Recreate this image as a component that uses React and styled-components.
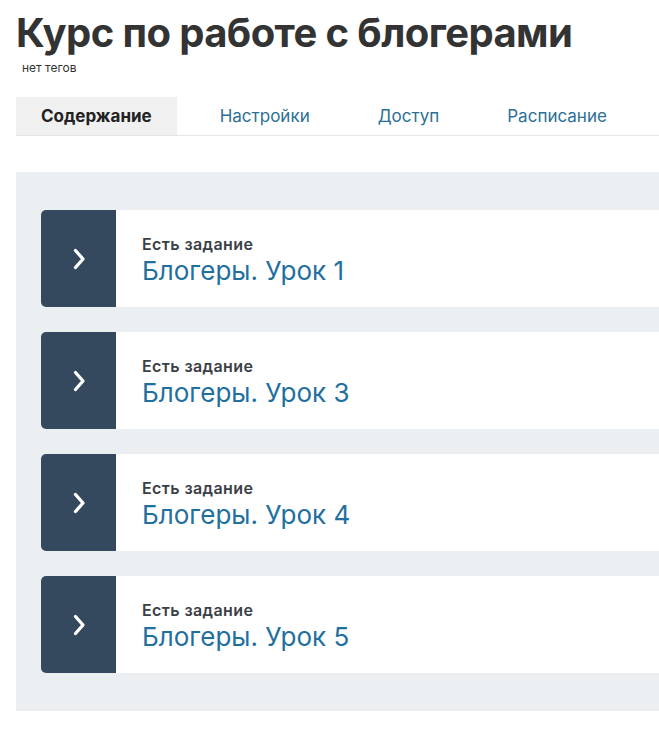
import styled, { createGlobalStyle } from 'styled-components';

const GlobalStyle = createGlobalStyle`
  html, body {
    margin: 0;
    padding: 0;
    background: #ffffff;
    overflow: hidden;
  }
  body {
    font-family: Inter, 'Noto Sans', sans-serif;
    color: #333333;
  }
`;

const Page = styled.div`
  padding: 9px 0 0 16px;
`;

const Title = styled.h1`
  margin: 0;
  font-size: 40px;
  font-weight: 700;
  line-height: 48px;
  letter-spacing: -0.6px;
  color: #333333;
`;

const Tags = styled.div`
  margin: 4px 0 0 6px;
  font-size: 12px;
  line-height: 14px;
  color: #333333;
`;

const Tabs = styled.div`
  display: flex;
  gap: 18px;
  margin-top: 22px;
  border-bottom: 1px solid #e6e6e6;
`;

const Tab = styled.div`
  height: 38px;
  display: flex;
  align-items: center;
  padding: 0 25px;
  font-size: 17px;
  font-weight: ${(p) => (p.$active ? 700 : 400)};
  color: ${(p) => (p.$active ? '#222222' : '#2d6f96')};
  background: ${(p) => (p.$active ? '#f0f0f0' : 'transparent')};
`;

const Lessons = styled.div`
  margin-top: 36px;
  background: #eceff1;
  padding: 38px 0 38px 25px;
  display: flex;
  flex-direction: column;
  gap: 25px;
`;

const Card = styled.div`
  display: flex;
  height: 97px;
  background: #ffffff;
  border-radius: 5px 0 0 5px;
`;

const Toggle = styled.div`
  width: 75px;
  flex-shrink: 0;
  display: flex;
  align-items: center;
  justify-content: center;
  background: #34495e;
  border-radius: 5px 0 0 5px;
`;

const Info = styled.div`
  display: flex;
  flex-direction: column;
  justify-content: center;
  padding: 5px 0 0 26px;
`;

const Badge = styled.div`
  font-size: 16px;
  font-weight: 600;
  line-height: 20px;
  letter-spacing: 0.4px;
  color: #3b4046;
`;

const LessonName = styled.div`
  font-size: 26px;
  font-weight: 400;
  line-height: 34px;
  color: #1f6f9f;
`;

const tabs = ['Содержание', 'Настройки', 'Доступ', 'Расписание'];
const lessons = ['Блогеры. Урок 1', 'Блогеры. Урок 3', 'Блогеры. Урок 4', 'Блогеры. Урок 5'];

function Chevron() {
  return (
    <svg width="18" height="24" viewBox="0 0 18 24" fill="none">
      <path d="M5.5 3.5 L13 12 L5.5 20.5" stroke="#ffffff" strokeWidth="3.3" strokeLinecap="round" strokeLinejoin="round" />
    </svg>
  );
}

export default function App() {
  return (
    <>
      <GlobalStyle />
      <Page>
        <Title>Курс по работе с блогерами</Title>
        <Tags>нет тегов</Tags>
        <Tabs>
          {tabs.map((t, i) => (
            <Tab key={t} $active={i === 0}>{t}</Tab>
          ))}
        </Tabs>
        <Lessons>
          {lessons.map((name) => (
            <Card key={name}>
              <Toggle>
                <Chevron />
              </Toggle>
              <Info>
                <Badge>Есть задание</Badge>
                <LessonName>{name}</LessonName>
              </Info>
            </Card>
          ))}
        </Lessons>
      </Page>
    </>
  );
}
